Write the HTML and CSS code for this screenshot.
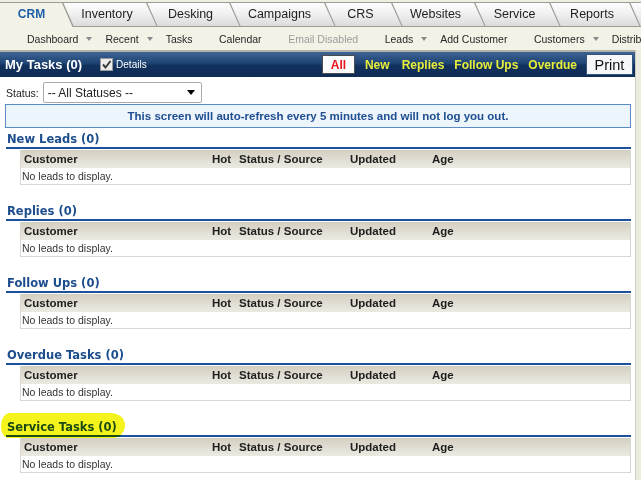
FILE: index.html
```html
<!DOCTYPE html>
<html>
<head>
<meta charset="utf-8">
<title>My Tasks</title>
<link rel="stylesheet" href="styles.css">
</head>
<body>
<div class="tabs">
  <div class="tab t1 active"><span>CRM</span></div>
  <div class="tab t2"><span>Inventory</span></div>
  <div class="tab t3"><span>Desking</span></div>
  <div class="tab t4"><span>Campaigns</span></div>
  <div class="tab t5"><span>CRS</span></div>
  <div class="tab t6"><span>Websites</span></div>
  <div class="tab t7"><span>Service</span></div>
  <div class="tab t8"><span>Reports</span></div>
  <div class="tab t9"><span></span></div>
</div>
<div class="subnav">
  <span class="nav dd">Dashboard<i class="caret"></i></span>
  <span class="nav dd">Recent<i class="caret"></i></span>
  <span class="nav">Tasks</span>
  <span class="nav">Calendar</span>
  <span class="nav disabled">Email Disabled</span>
  <span class="nav dd">Leads<i class="caret"></i></span>
  <span class="nav">Add Customer</span>
  <span class="nav dd">Customers<i class="caret"></i></span>
  <span class="nav">Distrib</span>
</div>
<div class="main">
  <div class="titlebar">
    <span class="title">My Tasks (0)</span>
    <span class="details">
      <svg class="check" width="13" height="13" viewBox="0 0 13 13"><rect x="0.5" y="0.5" width="12" height="12" fill="#ececec" stroke="#9a9a9a"/><path d="M3 6.5 L5.5 9.5 L10.5 3" fill="none" stroke="#3a3a3a" stroke-width="2"/></svg>
      Details
    </span>
    <div class="filters">
      <span class="btn all">All</span>
      <span class="flink new">New</span>
      <span class="flink replies">Replies</span>
      <span class="flink follow">Follow Ups</span>
      <span class="flink overdue">Overdue</span>
      <span class="btn print">Print</span>
    </div>
  </div>
  <div class="statusrow">
    <span class="label">Status:</span>
    <div class="select"><span>-- All Statuses --</span><i class="arrow"></i></div>
  </div>
  <div class="notice">This screen will auto-refresh every 5 minutes and will not log you out.</div>

  <section class="sec">
    <h2 class="sec-title">New Leads (0)</h2>
    <div class="grid">
      <div class="head"><span>Customer</span><span>Hot</span><span>Status / Source</span><span>Updated</span><span>Age</span></div>
      <div class="empty">No leads to display.</div>
    </div>
  </section>
  <section class="sec">
    <h2 class="sec-title">Replies (0)</h2>
    <div class="grid">
      <div class="head"><span>Customer</span><span>Hot</span><span>Status / Source</span><span>Updated</span><span>Age</span></div>
      <div class="empty">No leads to display.</div>
    </div>
  </section>
  <section class="sec">
    <h2 class="sec-title">Follow Ups (0)</h2>
    <div class="grid">
      <div class="head"><span>Customer</span><span>Hot</span><span>Status / Source</span><span>Updated</span><span>Age</span></div>
      <div class="empty">No leads to display.</div>
    </div>
  </section>
  <section class="sec">
    <h2 class="sec-title">Overdue Tasks (0)</h2>
    <div class="grid">
      <div class="head"><span>Customer</span><span>Hot</span><span>Status / Source</span><span>Updated</span><span>Age</span></div>
      <div class="empty">No leads to display.</div>
    </div>
  </section>
  <section class="sec">
    <h2 class="sec-title">Service Tasks (0)<span class="hl"></span></h2>
    <div class="grid">
      <div class="head"><span>Customer</span><span>Hot</span><span>Status / Source</span><span>Updated</span><span>Age</span></div>
      <div class="empty">No leads to display.</div>
    </div>
  </section>
</div>
</body>
</html>
```
FILE: styles.css
```css
html, body {
  margin: 0;
  padding: 0;
}
body {
  background: #ecebdf;
  font-family: "Liberation Sans", Arial, sans-serif;
  color: #222;
  width: 641px;
  overflow: hidden;
}

/* ---------- tabs ---------- */
.tabs {
  display: flex;
  height: 27px;
  background: #efeee2;
  overflow: hidden;
  white-space: nowrap;
}
.tab {
  position: relative;
  flex-shrink: 0;
  height: 25px;
  margin-top: 2px;
  display: flex;
  align-items: center;
  justify-content: center;
  padding-left: 4px;
  padding-bottom: 1px;
  box-sizing: border-box;
  font-size: 12.5px;
  color: #1e1e1e;
}
.tab::before {
  content: "";
  position: absolute;
  top: 0; bottom: 0; left: 0; right: -11px;
  background: #9c9c95;
  clip-path: polygon(0 0, calc(100% - 11px) 0, 100% 100%, 0 100%);
  z-index: -1;
}
.tab::after {
  content: "";
  position: absolute;
  top: 1px; bottom: 1px; left: 0; right: -9.5px;
  background: linear-gradient(#fdfdfd, #f2f2f2 40%, #dcdcdc);
  clip-path: polygon(0 0, calc(100% - 10.5px) 0, 100% 100%, 0 100%);
  z-index: -1;
}
.tab.active::after {
  background: #f3f2e6;
  bottom: 0;
}
.tab.active {
  padding-left: 0;
  color: #1f5ea8;
  font-weight: bold;
  font-size: 12px;
}
.t1 { width: 63px; z-index: 20; }
.t2 { width: 84px; z-index: 9; }
.t3 { width: 83px; z-index: 8; }
.t4 { width: 95px; z-index: 7; }
.t5 { width: 67px; z-index: 6; }
.t6 { width: 83px; z-index: 5; }
.t7 { width: 75px; z-index: 4; }
.t8 { width: 80px; z-index: 3; }
.t9 { width: 60px; z-index: 2; }

/* ---------- sub navigation ---------- */
.subnav {
  display: flex;
  align-items: center;
  height: 23px;
  padding-left: 27px;
  background: #f3f2e6;
  white-space: nowrap;
  overflow: hidden;
  font-size: 10.5px;
  color: #262626;
}
.nav {
  display: inline-flex;
  align-items: center;
  margin-right: 26.5px;
  flex-shrink: 0;
}
.nav.dd { margin-right: 13px; }
.nav.disabled { color: #9c9c9c; }
.caret {
  display: inline-block;
  width: 0; height: 0;
  margin-left: 8px;
  margin-top: 1px;
  border-top: 4px solid #8a8a8a;
  border-left: 3px solid transparent;
  border-right: 3px solid transparent;
}

/* ---------- main ---------- */
.main {
  width: 635px;
  background: #fff;
  border-right: 1px solid #cdccc2;
  padding-bottom: 40px;
}
.titlebar {
  display: flex;
  align-items: center;
  height: 25px;
  border-top: 2px solid #b3b3ab;
  padding-left: 5px;
  background: linear-gradient(#3d6494, #1e4474 45%, #11305c 55%, #0f2c55);
}
.title {
  color: #fff;
  font-weight: bold;
  font-size: 13px;
}
.details {
  display: flex;
  align-items: center;
  margin-left: 18px;
  color: #fff;
  font-size: 10px;
}
.check { margin-right: 3px; }
.filters {
  margin-left: auto;
  margin-right: 2px;
  display: flex;
  align-items: center;
}
.btn {
  box-sizing: border-box;
  display: flex;
  align-items: center;
  justify-content: center;
}
.all {
  width: 33px;
  height: 19px;
  border: 1px solid #4d4d4d;
  background: #fbfbfb;
  color: #e8141c;
  font-weight: bold;
  font-size: 12px;
  margin-right: 10px;
}
.flink {
  color: #e8ef3a;
  font-weight: bold;
  font-size: 12px;
}
.new { margin-right: 12px; }
.replies { margin-right: 10px; }
.follow { margin-right: 10px; }
.overdue { margin-right: 9px; }
.print {
  width: 47px;
  height: 21px;
  border: 1px solid #33557f;
  background: #f5f7f9;
  color: #111;
  font-size: 14.5px;
}

.statusrow {
  display: flex;
  align-items: center;
  height: 21px;
  margin-top: 5px;
  padding-left: 6px;
  font-size: 10.5px;
}
.select {
  box-sizing: border-box;
  display: flex;
  align-items: center;
  width: 159px;
  height: 21px;
  margin-left: 4px;
  padding-left: 4px;
  border: 1px solid #a9aab0;
  border-radius: 2px;
  background: #fff;
  font-size: 12px;
  color: #222;
}
.arrow {
  margin-left: auto;
  margin-right: 6px;
  width: 0; height: 0;
  border-top: 5px solid #000;
  border-left: 4px solid transparent;
  border-right: 4px solid transparent;
}
.notice {
  box-sizing: border-box;
  height: 24px;
  margin: 1px 4px 0 5px;
  border: 1px solid #5b8ac2;
  background: #ecf4fc;
  color: #204f91;
  font-weight: bold;
  font-size: 11.5px;
  line-height: 22px;
  text-align: center;
}

/* ---------- sections ---------- */
.sec {
  margin: 0 4px 0 6px;
}
.sec:first-of-type { margin-top: 4px; }
.sec-title {
  position: relative;
  margin: 0;
  padding-left: 1px;
  font-family: "DejaVu Sans", Verdana, sans-serif;
  font-weight: bold;
  font-size: 11.5px;
  line-height: 15px;
  color: #1c4d8d;
  border-bottom: 2px solid #1c4f9c;
}
.hl {
  position: absolute;
  left: -5px;
  top: -7px;
  width: 124px;
  height: 25px;
  background: #f4f41c;
  border-radius: 9px 14px 12px 7px / 12px 12px 13px 11px;
  mix-blend-mode: multiply;
}
.grid {
  margin: 1px 0 19px 14px;
  border: 1px solid #d7d7d3;
  border-top: 0;
}
.head {
  display: grid;
  grid-template-columns: 188px 27px 111px 82px 1fr;
  height: 18px;
  align-items: center;
  background: linear-gradient(#d3cfc2, #e2dfd5 60%, #ebe9e1);
  font-weight: bold;
  font-size: 11.5px;
  color: #1e1e1e;
}
.head span { padding-left: 3px; }
.empty {
  height: 16px;
  line-height: 16px;
  padding-left: 1px;
  font-size: 10.5px;
  color: #333;
}
```
